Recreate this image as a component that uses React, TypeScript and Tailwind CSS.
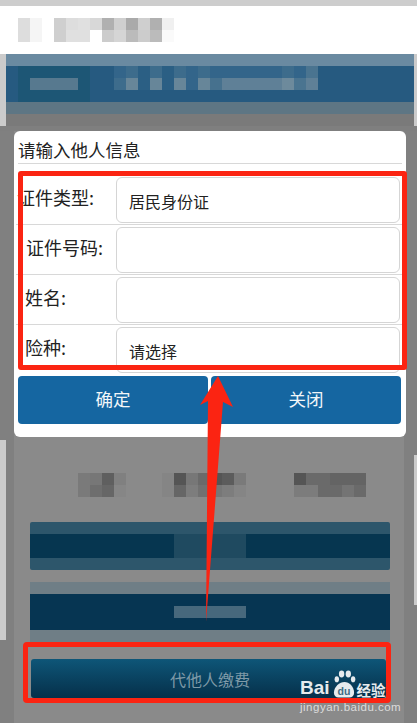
const SANS = '"Liberation Sans",sans-serif';

function Mosaic({ rows }: { rows: string[][] }) {
  return (
    <div className="flex flex-col">
      {rows.map((row, r) => (
        <div key={r} className="flex">
          {row.map((c, i) => (
            <div key={i} className={`h-[12px] w-[12px] ${c}`} />
          ))}
        </div>
      ))}
    </div>
  );
}

function Field({ label, value, pad }: { label: string; value?: string; pad: string }) {
  return (
    <div className="flex h-[50px] border-b border-[#d8d8d8] pt-[2px] last:border-b-0">
      <div className={`w-[100px] pt-[7px] text-[18px] leading-[26px] text-[#222] ${pad}`}>{label}</div>
      <div className="flex h-[46px] w-[284px] items-center rounded-[6px] border border-[#d5d5d5] bg-white pl-[12px] pt-[1px] text-[16px] text-[#222]">
        {value}
      </div>
    </div>
  );
}

export default function App() {
  return (
    <div
      className="relative h-[723px] w-[417px] overflow-hidden bg-[#808080]"
      style={{ fontFamily: '"Noto Sans CJK SC","Liberation Sans",sans-serif' }}
    >
      <div className="h-[6px] bg-[#cdcdcd]" />
      <div className="h-[48px] bg-white pl-[18px] pt-[12px]">
        <Mosaic
          rows={[
            ["bg-[#dddddd]", "bg-[#f5f5f5]", "bg-white", "bg-[#cfcfcf]", "bg-[#dddddd]", "bg-[#e0e0e0]", "bg-[#d8d8d8]", "bg-[#b0b0b0]", "bg-[#cfcfcf]", "bg-[#aaaaaa]", "bg-[#cfcfcf]", "bg-[#b0b0b0]", "bg-[#f0f0f0]"],
            ["bg-[#dddddd]", "bg-[#f5f5f5]", "bg-white", "bg-[#cfcfcf]", "bg-[#e0e0e0]", "bg-[#e0e0e0]", "bg-white", "bg-[#cccccc]", "bg-[#d5d5d5]", "bg-[#bbbbbb]", "bg-[#cccccc]", "bg-[#bbbbbb]", "bg-[#fafafa]"],
          ]}
        />
      </div>

      <div className="bg-[#cbcbcb] pl-[6px] pr-[3px]">
        <div className="h-[12px] bg-[#6a8aa1]" />
        <div className="flex h-[36px] bg-[#265a80]">
          <div className="ml-[12px] flex h-full w-[72px] flex-col bg-[#1d5675] pl-[12px] pt-[12px]">
            <div className="h-[12px] w-[48px] bg-[#57798f]" />
          </div>
          <div className="ml-[24px]">
            <Mosaic
              rows={[
                ["bg-[#33658a]", "bg-[#3d6c8c]", "bg-[#2b5f84]", "bg-[#3d6c8c]", "bg-[#2b5f84]", "bg-[#3d6c8c]", "bg-[#33658a]", "bg-[#3d6c8c]", "bg-[#33658a]", "bg-[#33658a]", "bg-[#33658a]", "bg-[#33658a]", "bg-[#33658a]", "bg-[#33658a]", "bg-[#3d6c8c]", "bg-[#33658a]", "bg-[#4a7490]"],
                ["bg-[#3d6c8c]", "bg-[#678699]", "bg-[#2b5f84]", "bg-[#678699]", "bg-[#2b5f84]", "bg-[#678699]", "bg-[#33658a]", "bg-[#678699]", "bg-[#46718e]", "bg-[#5f8097]", "bg-[#5f8097]", "bg-[#5f8097]", "bg-[#5f8097]", "bg-[#5f8097]", "bg-[#6d8a9c]", "bg-[#4a7490]", "bg-[#5f8097]"],
              ]}
            />
          </div>
        </div>
        <div className="h-[12px] bg-[#5e7684]" />
        <div className="h-[12px] bg-[#7a7a7a]" />
      </div>
      <div className="h-[5px] bg-[#7f7f7f]" />

      <div className="flex h-[592px]">
        <div className="w-[6px] pt-[309px]">
          <div className="h-[200px] bg-[#cbcbcb]" />
        </div>
        <div className="mx-[8px] flex w-[390px] flex-col bg-[#8a8a8a] pt-[342px]">
          <div className="flex">
            <div className="ml-[64px]">
              <Mosaic
                rows={[
                  ["bg-[#7a7a7a]", "bg-[#777777]", "bg-[#5f5f5f]", "bg-[#808080]"],
                  ["bg-[#7a7a7a]", "bg-[#6e6e6e]", "bg-[#666666]", "bg-[#868686]"],
                ]}
              />
            </div>
            <div className="ml-[36px]">
              <Mosaic
                rows={[
                  ["bg-[#858585]", "bg-[#555555]", "bg-[#777777]", "bg-[#6a6a6a]", "bg-[#555555]", "bg-[#5c5c5c]", "bg-[#7a7a7a]"],
                  ["bg-[#858585]", "bg-[#666666]", "bg-[#7d7d7d]", "bg-[#717171]", "bg-[#777777]", "bg-[#7d7d7d]", "bg-[#858585]"],
                ]}
              />
            </div>
            <div className="ml-[48px]">
              <Mosaic
                rows={[
                  ["bg-[#555555]", "bg-[#6a6a6a]", "bg-[#6a6a6a]", "bg-[#646464]", "bg-[#646464]", "bg-[#646464]"],
                  ["bg-[#7c7c7c]", "bg-[#7c7c7c]", "bg-[#6a6a6a]", "bg-[#6a6a6a]", "bg-[#747474]", "bg-[#6a6a6a]"],
                ]}
              />
            </div>
          </div>

          <div className="ml-[16px] mt-[25px] flex h-[48px] w-[360px] flex-col justify-center rounded-[2px] bg-[#2d566b]">
            <div className="flex h-[24px] justify-center bg-[#063650]">
              <div className="h-full w-[72px] bg-[#1f4a60]" />
            </div>
          </div>
          <div className="ml-[16px] mt-[12px] flex h-[60px] w-[360px] flex-col justify-center bg-[#6f7e86]">
            <div className="flex h-[36px] items-center justify-center bg-[#063552]">
              <div className="h-[12px] w-[72px] bg-[#47687c]" />
            </div>
          </div>
          <div className="ml-[17px] mt-[17px] flex h-[39px] w-[355px] items-center justify-center rounded-[3px] bg-gradient-to-b from-[#0e5678] to-[#06304a] pl-[3px] text-[16px] text-[#7f9aa8]">
            代他人缴费
          </div>
        </div>
        <div className="ml-auto w-[3px] pt-[324px]">
          <div className="h-[150px] bg-[#cbcbcb]" />
        </div>
      </div>

      {/* modal */}
      <div className="absolute left-[14px] top-[131px] h-[306px] w-[392px] rounded-[6px] bg-white">
        <div className="mx-[4px] h-[33px] border-b border-[#d8d8d8] pt-[4px] text-[17.5px] leading-[30px] text-[#222]">
          请输入他人信息
        </div>
        <div className="ml-[2px] mt-[11px]">
          <Field label="证件类型:" value="居民身份证" pad="pl-[1px]" />
          <Field label="证件号码:" pad="pl-[10px]" />
          <Field label="姓名:" pad="pl-[9px]" />
          <Field label="险种:" value="请选择" pad="pl-[9px]" />
        </div>
        <div className="ml-[4px] mt-[1px] flex gap-[3px]">
          <div className="flex h-[48px] w-[190px] items-center justify-center rounded-[4px] bg-[#1566a1] pb-[2px] text-[17.5px] text-[#f2f6f9]">确定</div>
          <div className="flex h-[48px] w-[190px] items-center justify-center rounded-[4px] bg-[#1566a1] pb-[2px] text-[17.5px] text-[#f2f6f9]">关闭</div>
        </div>
      </div>

      {/* annotations */}
      <div className="absolute left-[18px] top-[171px] h-[199px] w-[389px] rounded-[3px] border-[5px] border-[#fb2412]" />
      <div className="absolute left-[23px] top-[642px] h-[61px] w-[368px] rounded-[4px] border-[5px] border-[#fb2412]" />
      <svg className="absolute left-0 top-0" width="417" height="723">
        <polygon points="206,622 208,401 200,405 218,376 233,407 223,402" fill="#fb2412" />
      </svg>

      {/* watermark */}
      <div className="absolute left-[300px] top-[669px] text-[#e6ebee]">
        <div className="flex h-[30px] items-end">
          <span className="text-[19px] font-bold leading-[22px]" style={{ fontFamily: SANS }}>Bai</span>
          <svg width="24" height="30" viewBox="0 0 25 30" className="ml-[2px]">
            <ellipse cx="5" cy="10" rx="2.3" ry="3.2" fill="#e6ebee" />
            <ellipse cx="10" cy="4.5" rx="2.8" ry="3.6" fill="#e6ebee" />
            <ellipse cx="17" cy="4.5" rx="2.8" ry="3.6" fill="#e6ebee" />
            <ellipse cx="22" cy="10" rx="2.3" ry="3.2" fill="#e6ebee" />
            <path d="M2 24c0-6 6-11 11-11s10 5 10 11c0 3-2 5-5 5H7c-3 0-5-2-5-5z" fill="#e6ebee" />
            <text x="12.5" y="26" textAnchor="middle" fontSize="11" fontWeight="700" fill="#3f6d84" fontFamily={SANS}>du</text>
          </svg>
          <span className="ml-[1px] text-[14.5px] font-bold leading-[18px]">经验</span>
        </div>
        <div className="mt-[2px] whitespace-nowrap text-[11.5px] leading-[13px] tracking-[0.5px] text-[#dcdcdc]" style={{ fontFamily: SANS }}>
          jingyan.baidu.com
        </div>
      </div>
    </div>
  );
}
